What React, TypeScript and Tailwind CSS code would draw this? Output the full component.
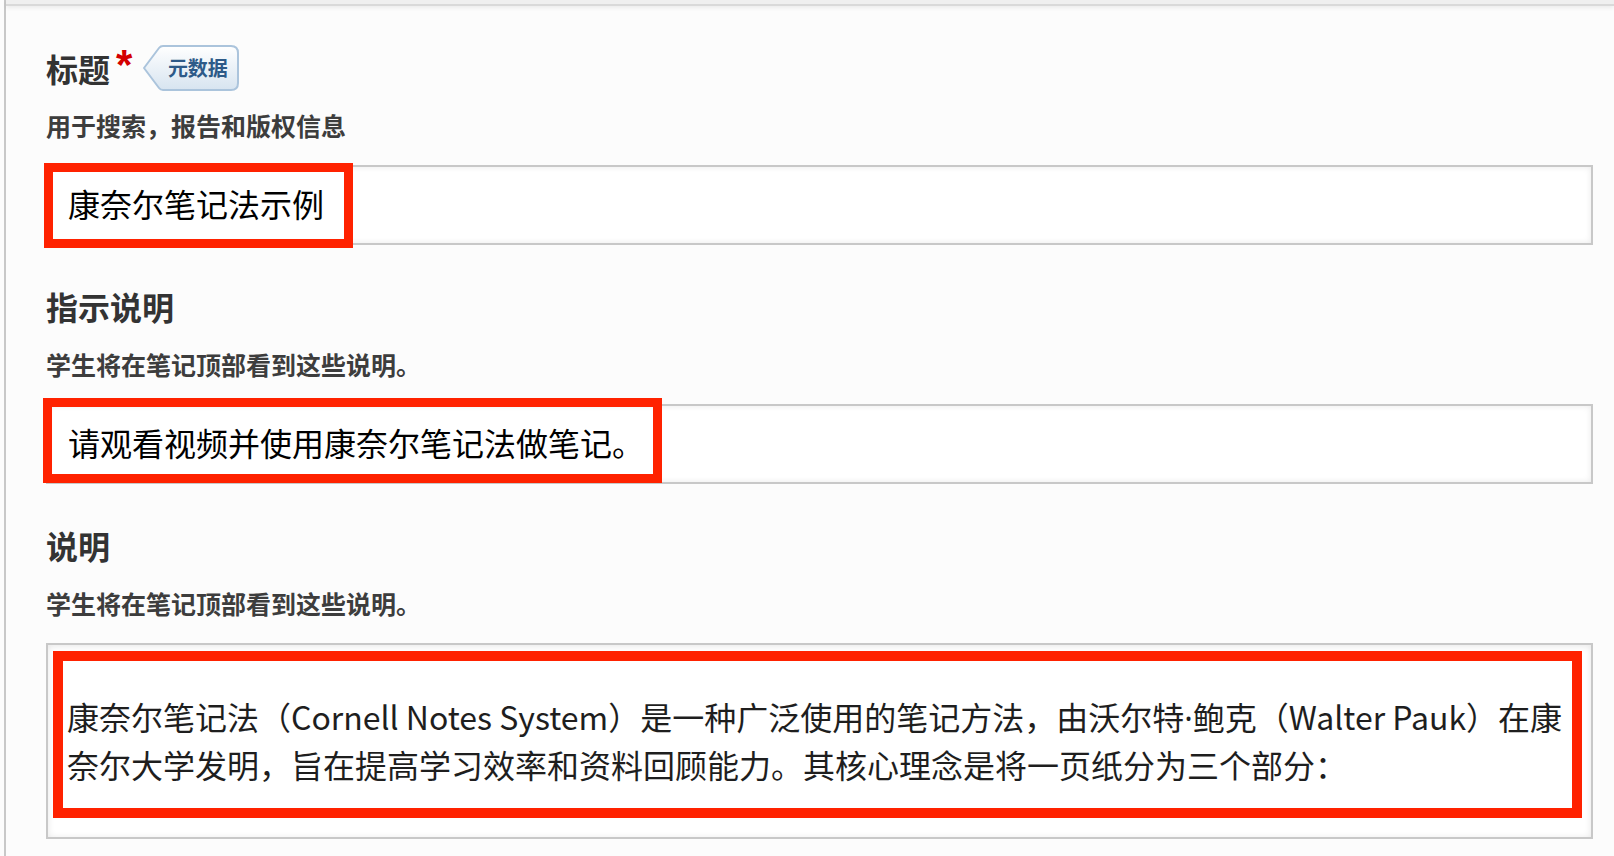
import React from 'react';

const cjk = { fontFamily: '"Noto Sans CJK SC", "Noto Sans", sans-serif' };

function MetaTag() {
  return (
    <span className="relative ml-[10px] inline-flex h-[46px] w-[97px] items-center justify-center pl-[14px]">
      <svg className="absolute inset-0" width="97" height="46" viewBox="0 0 97 46">
        <defs>
          <linearGradient id="tagfill" x1="0" y1="0" x2="0" y2="1">
            <stop offset="0" stopColor="#ffffff" />
            <stop offset="1" stopColor="#d7e4f0" />
          </linearGradient>
        </defs>
        <path
          d="M2 23 L17 3 Q18.5 1 21 1 L89 1 Q96 1 96 8 L96 38 Q96 45 89 45 L21 45 Q18.5 45 17 43 Z"
          fill="url(#tagfill)"
          stroke="#abc4dc"
          strokeWidth="2"
          strokeLinejoin="round"
        />
      </svg>
      <span className="relative text-[20px] font-bold leading-none text-[#2d5a88]">元数据</span>
    </span>
  );
}

function Field({ value, boxClass }: { value: string; boxClass: string }) {
  return (
    <div className="relative">
      <input
        readOnly
        value={value}
        style={cjk}
        className="block h-[80px] w-full border-2 border-[#c8c8c8] bg-white pb-[5px] pl-[20px] text-[32px] text-black shadow-[inset_0_0_6px_rgba(0,0,0,0.09)] outline-none"
      />
      <div className={`pointer-events-none absolute border-[9px] border-[#ff2200] ${boxClass}`}></div>
    </div>
  );
}

export default function App() {
  return (
    <div className="min-h-screen bg-[#fcfcfc] pl-[4px]" style={cjk}>
      <div className="min-h-[856px] border-l-2 border-[#c8c8c8]">
        <div className="h-[6px] border-b-2 border-[#d9d9d9] bg-[#efefef] shadow-[0_2px_4px_rgba(0,0,0,0.07)]"></div>

        <div className="pl-[40px] pr-[21px] pb-[17px]">
          {/* 标题 */}
          <div className="mt-[39px] flex h-[46px] items-center">
            <h2 className="text-[32px] font-bold leading-[40px] text-[#333333]">标题</h2>
            <span
              className="ml-[6px] -mt-[1px] self-start text-[42px] font-bold leading-none text-[#d40000]"
              style={{ fontFamily: '"Liberation Sans", sans-serif' }}
            >
              *
            </span>
            <MetaTag />
          </div>
          <p className="mt-[18px] text-[25px] font-semibold leading-[32px] text-[#3d3d3d]">用于搜索，报告和版权信息</p>
          <div className="mt-[24px]">
            <Field value="康奈尔笔记法示例" boxClass="-left-[2px] -top-[2px] h-[85px] w-[309px]" />
          </div>

          {/* 指示说明 */}
          <h2 className="mt-[41px] text-[32px] font-bold leading-[40px] text-[#333333]">指示说明</h2>
          <p className="mt-[22px] text-[25px] font-semibold leading-[32px] text-[#3d3d3d]">学生将在笔记顶部看到这些说明。</p>
          <div className="mt-[24px]">
            <Field value="请观看视频并使用康奈尔笔记法做笔记。" boxClass="-left-[3px] -top-[6px] h-[85px] w-[619px]" />
          </div>

          {/* 说明 */}
          <h2 className="mt-[41px] text-[32px] font-bold leading-[40px] text-[#333333]">说明</h2>
          <p className="mt-[22px] text-[25px] font-semibold leading-[32px] text-[#3d3d3d]">学生将在笔记顶部看到这些说明。</p>
          <div className="relative mt-[24px]">
            <div className="h-[196px] border-2 border-[#c8c8c8] bg-white pl-[19px] pt-[48px] text-[32px] leading-[46px] text-[#1e1e1e] shadow-[inset_0_1px_7px_rgba(0,0,0,0.1)]">
              <p className="whitespace-nowrap">
                康奈尔笔记法（Cornell Notes System）是一种广泛使用的笔记方法，由沃尔特
                <span style={{ fontFamily: '"Noto Sans", sans-serif' }}>·</span>
                鲍克（Walter Pauk）在康
              </p>
              <p className="whitespace-nowrap">奈尔大学发明，旨在提高学习效率和资料回顾能力。其核心理念是将一页纸分为三个部分：</p>
            </div>
            <div className="pointer-events-none absolute left-[7px] top-[8px] h-[167px] w-[1529px] border-[10px] border-[#ff2200]"></div>
          </div>
        </div>
      </div>
    </div>
  );
}
